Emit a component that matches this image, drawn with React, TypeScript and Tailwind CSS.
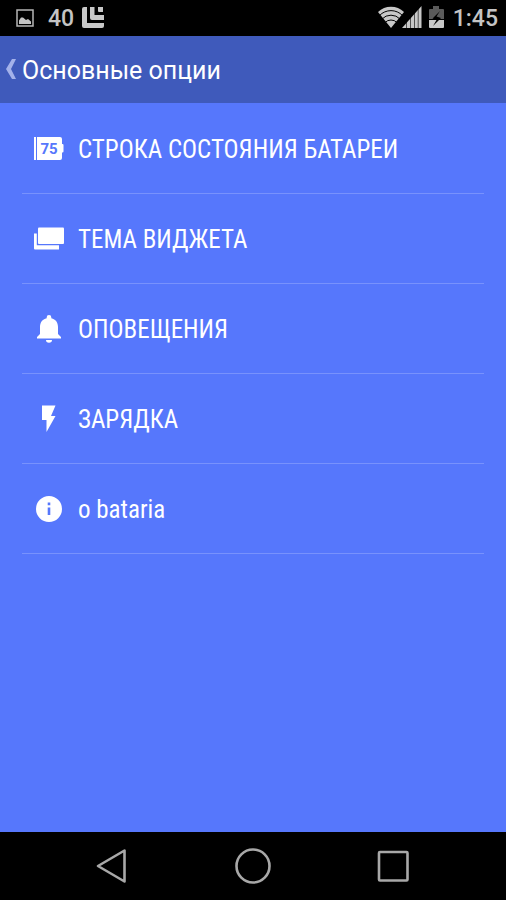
import type { ReactNode } from 'react';
import { clsx } from 'clsx';

interface MenuItem {
  id: string;
  icon: ReactNode;
  title: string;
}

const menuItems: MenuItem[] = [
  { id: 'status', icon: <BatteryLevelIcon />, title: 'СТРОКА СОСТОЯНИЯ БАТАРЕИ' },
  { id: 'theme', icon: <WidgetIcon />, title: 'ТЕМА ВИДЖЕТА' },
  { id: 'alerts', icon: <BellIcon />, title: 'ОПОВЕЩЕНИЯ' },
  { id: 'charging', icon: <BoltIcon />, title: 'ЗАРЯДКА' },
  { id: 'about', icon: <InfoIcon />, title: 'о bataria' },
];

function BatteryLevelIcon() {
  return (
    <svg width="30" height="30" viewBox="0 0 30 30" fill="currentColor">
      <path d="M0 3h2v23H0z" />
      <path d="M3 3h23a2 2 0 0 1 2 2v5h.500a1 1 0 0 1 1 1v6.500a1 1 0 0 1-1 1H28V24a2 2 0 0 1-2 2H3z" />
      <text
        x="15"
        y="20"
        textAnchor="middle"
        className="fill-[#5677fc] font-['Roboto',sans-serif] text-[15px] font-bold"
      >
        75
      </text>
    </svg>
  );
}

function WidgetIcon() {
  return (
    <svg width="30" height="30" viewBox="0 0 30 30" fill="currentColor">
      <path d="M5 3.500h24a1 1 0 0 1 1 1V19a1 1 0 0 1-1 1H5a1 1 0 0 1-1-1V4.500a1 1 0 0 1 1-1z" />
      <path d="M0 9.500h2.800V21.300H25V25.500H1a1 1 0 0 1-1-1z" />
    </svg>
  );
}

function BellIcon() {
  return (
    <svg width="30" height="30" viewBox="0 0 30 30" fill="currentColor">
      <path d="M12 26h6a3 2.700 0 0 1-6 0zM3 24.600v-1.600l3-3V13c0-4.500 2.300-7.700 6.700-8.800V3.300a2.300 2.300 0 0 1 4.600 0v.9C21.700 5.300 24 8.500 24 13v7l3 3v1.600z" />
    </svg>
  );
}

function BoltIcon() {
  return (
    <svg width="30" height="30" viewBox="0 0 30 30" fill="currentColor">
      <path d="M8 1.500h13.500L17 12h4.500L12.500 28V16H8z" />
    </svg>
  );
}

function InfoIcon() {
  return (
    <svg width="30" height="30" viewBox="0 0 30 30" fill="currentColor">
      <path
        fillRule="evenodd"
        d="M15 2a13 13 0 1 1 0 26a13 13 0 0 1 0-26zM13.700 8.500v2.700h2.600V8.500zM13.700 13.500v7.500h2.600v-7.500z"
      />
    </svg>
  );
}

function StatusBar() {
  return (
    <div className="flex h-9 items-center justify-between bg-black pr-2 pl-4 text-[#c4c4c4]">
      <div className="flex items-center">
        <svg width="18" height="18" viewBox="0 0 18 18">
          <path d="M1 1h16v16H1z" fill="none" stroke="#b5b5b5" strokeWidth="1.500" />
          <path d="M3 15v-3.500l2-3h2l3 2.500 2-1 3 2.500V15z" fill="#c4c4c4" />
        </svg>
        <span className="ml-[14px] pt-px text-[23px] leading-9 font-medium">40</span>
        <svg className="ml-[7px]" width="24" height="24" viewBox="0 0 24 24" fill="#c8c8c8">
          <path d="M3 1h3v16h17v3a2 2 0 0 1-2 2H3a2 2 0 0 1-2-2V3a2 2 0 0 1 2-2z" />
          <path d="M9 1h4.500v8H23v5H11a2 2 0 0 1-2-2z" />
          <path d="M17 1h5v5h-4a1 1 0 0 1-1-1z" />
        </svg>
      </div>
      <div className="flex items-center">
        <svg width="26" height="24" viewBox="0 0 26 24">
          <path d="M0 6a19 19 0 0 1 26 0L13 22z" fill="#c8c8c8" />
          <path
            d="M1.500 9.500a16 16 0 0 1 23 0M4 13a12.500 12.500 0 0 1 18 0M7 16.500a8.500 8.500 0 0 1 12 0"
            fill="none"
            stroke="#000"
            strokeWidth="1"
          />
        </svg>
        <svg className="-ml-0.5" width="20" height="24" viewBox="0 0 20 24">
          <path d="M0 22L19.500 0v22z" fill="#c8c8c8" />
          <path d="M4.500 12v11M8.500 8v15M12.500 4v19M16.200 1v22" stroke="#000" strokeWidth=".6" />
        </svg>
        <svg className="ml-1.5" width="17" height="24" viewBox="0 0 17 24">
          <path d="M5 0h6v3h4a1 1 0 0 1 1 1v9H1V4a1 1 0 0 1 1-1h3z" fill="#5b5b5b" />
          <path d="M1 14h15v7a1 1 0 0 1-1 1H2a1 1 0 0 1-1-1z" fill="#c8c8c8" />
          <path d="M12 5L4.500 12.500l4 1.500L5 20l8-8-4.500-1.500z" fill="#000" />
        </svg>
        <span className="ml-2 pt-px text-[23px] leading-9 font-medium">1:45</span>
      </div>
    </div>
  );
}

function NavigationBar() {
  return (
    <nav className="flex h-[68px] items-center justify-center gap-[92px] bg-black text-[#a8a8a8]">
      <button aria-label="Назад" className="flex w-12 justify-center">
        <svg width="38" height="38" viewBox="0 0 38 38" fill="none" stroke="currentColor">
          <path d="M4 19L30.500 3.500v31z" strokeWidth="2.600" strokeLinejoin="round" />
        </svg>
      </button>
      <button aria-label="Главный экран" className="flex w-12 justify-center">
        <svg width="38" height="38" viewBox="0 0 38 38" fill="none" stroke="currentColor">
          <circle cx="19" cy="19" r="16.500" strokeWidth="2.600" />
        </svg>
      </button>
      <button aria-label="Недавние приложения" className="flex w-12 justify-center">
        <svg width="38" height="38" viewBox="0 0 38 38" fill="none" stroke="currentColor">
          <rect x="5" y="5" width="28.500" height="28.500" rx="1" strokeWidth="2.600" />
        </svg>
      </button>
    </nav>
  );
}

export default function App() {
  return (
    <div className="flex min-h-screen flex-col bg-[#5677fc] font-['Roboto',sans-serif]">
      <StatusBar />
      <header className="flex h-[67px] items-center bg-[#3f5abb] pl-1.5 text-white">
        <button aria-label="Вернуться" className="mr-1.5">
          <svg width="10" height="22" viewBox="0 0 10 22" fill="#a3b1ea">
            <path d="M6 0h4L5 10l5 10H6L0 10z" />
          </svg>
        </button>
        <h1 className="pt-0.5 text-[25px] leading-8">Основные опции</h1>
      </header>
      <main className="flex-1 px-[22px] pt-px">
        <ul>
          {menuItems.map((item) => (
            <li key={item.id} className="border-b border-[#7892fd]">
              <button
                className={clsx(
                  'flex h-[89px] w-full items-center gap-[14px] pl-3 text-left text-white',
                  "font-['Roboto_Condensed','Roboto',sans-serif] text-[25px] leading-8"
                )}
              >
                {item.icon}
                <span className="pt-[3px]">{item.title}</span>
              </button>
            </li>
          ))}
        </ul>
      </main>
      <NavigationBar />
    </div>
  );
}
